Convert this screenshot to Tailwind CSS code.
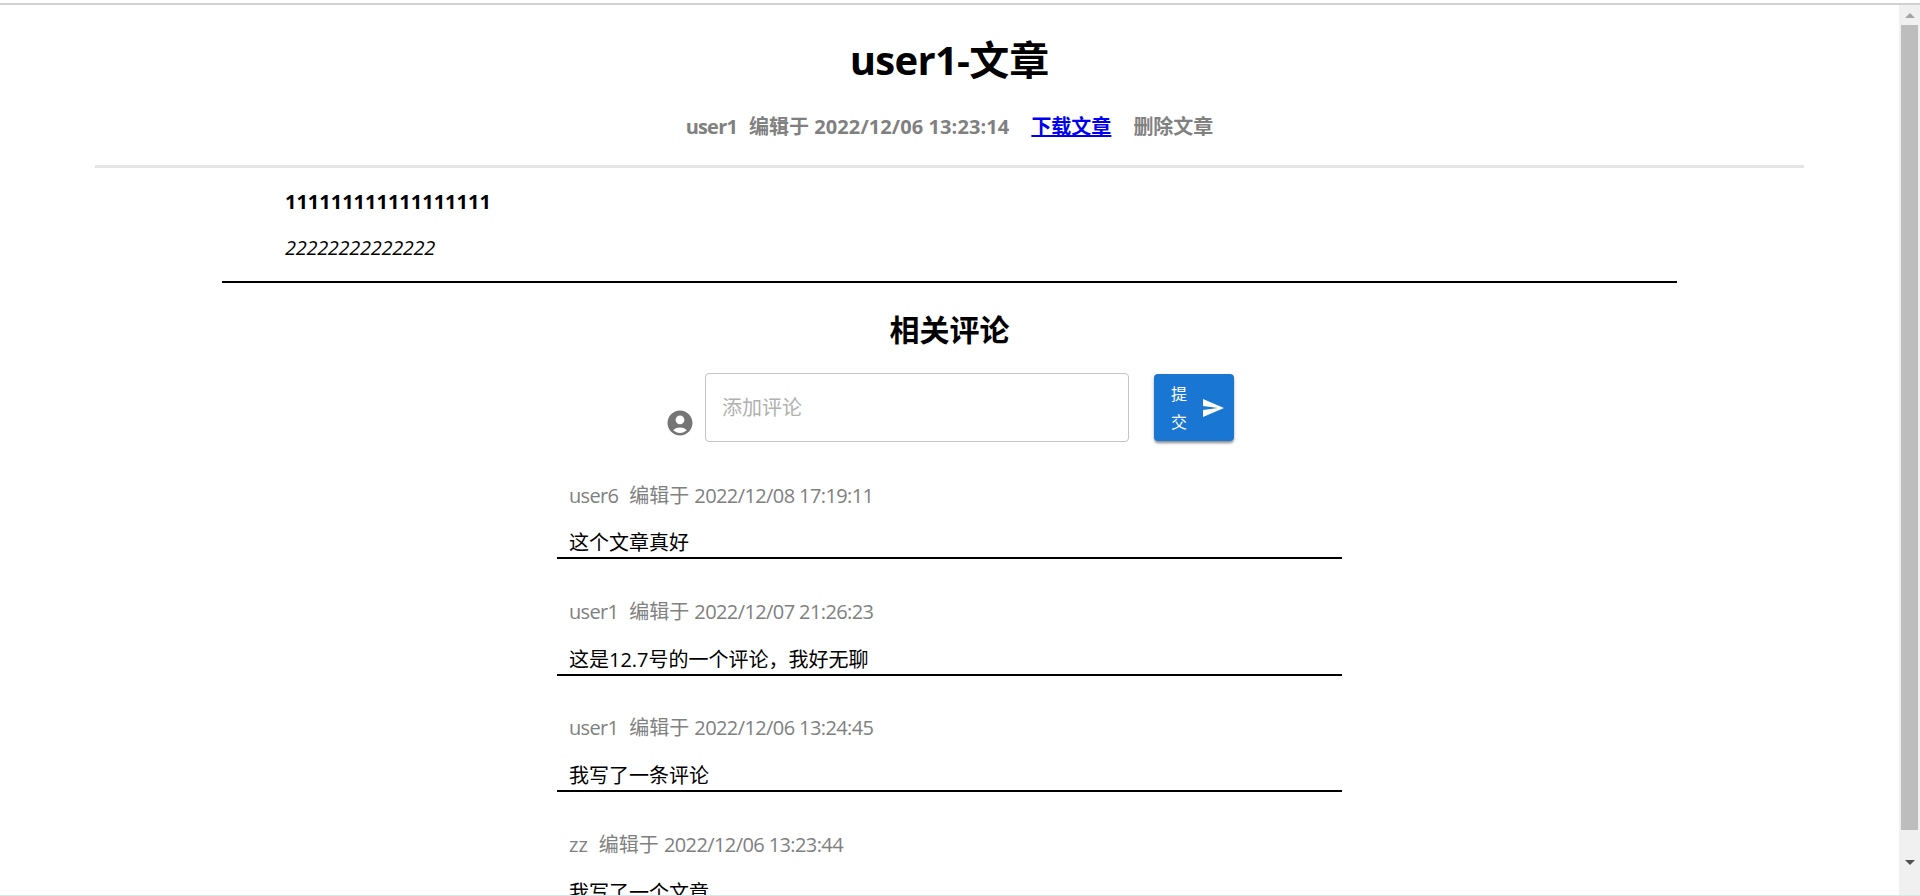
<!DOCTYPE html>
<html lang="zh-CN">
<head>
  <meta charset="UTF-8">
  <title>user1-文章</title>
  <script src="https://cdn.jsdelivr.net/npm/@tailwindcss/browser@4"></script>
</head>
<body class="h-[896px] overflow-hidden bg-white text-black font-['Open_Sans','Noto_Sans_CJK_SC',sans-serif]">
  <div class="flex flex-col h-[896px]">
    <div class="h-[3px] shrink-0"></div>
    <div class="h-[2px] shrink-0 bg-[#d0d0d0]"></div>
    <div class="flex flex-1 min-h-0">
      <!-- page -->
      <main class="flex-1 min-w-0 overflow-hidden">
        <header class="mx-[95px] border-b-[3px] border-[#e5e5e5] h-[163px] flex flex-col items-center">
          <h1 class="mt-[30px] text-[40px] leading-[50px] font-bold"><span class="tracking-[-0.7px]">user1-</span>文章</h1>
          <div class="mt-[28px] flex items-center text-[20px] leading-[28px] font-bold text-[#808080]">
            <span class="tracking-[-0.8px]">user1</span>
            <span class="ml-3">编辑于 <span class="tracking-[0.1px]">2022/12/06 13:23:14</span></span>
            <a href="#" class="ml-[22px] text-[#0000ee] underline">下载文章</a>
            <span class="ml-[22px]">删除文章</span>
          </div>
        </header>

        <section class="mx-[222px] border-b-2 border-black h-[115px] pl-[63px] pt-[20px]">
          <p class="text-[20px] leading-[28px] font-bold">111111111111111111</p>
          <p class="mt-[18px] text-[20px] leading-[28px] italic tracking-[-0.3px]">22222222222222</p>
        </section>

        <h2 class="mt-[25px] text-center text-[30px] leading-[44px] font-bold">相关评论</h2>

        <form class="mt-[21px] flex justify-center items-start">
          <svg class="w-[30px] h-[30px] mt-[35px] mr-[10px] text-[#757575]" viewBox="0 0 24 24" fill="currentColor"><path d="M12 2C6.48 2 2 6.48 2 12s4.48 10 10 10 10-4.48 10-10S17.52 2 12 2zm0 4c1.93 0 3.5 1.57 3.5 3.5S13.93 13 12 13s-3.5-1.57-3.5-3.5S10.07 6 12 6zm0 14c-2.03 0-3.98-.8-5.41-2.13C7.5 16.5 9.64 15.5 12 15.5s4.5 1 5.41 2.37C15.98 19.2 14.03 20 12 20z"/></svg>
          <input type="text" placeholder="添加评论" class="w-[424px] h-[69px] border border-[#c4c4c4] rounded-[4px] px-4 text-[20px] placeholder:text-[#b0b0b0]">
          <button type="button" class="ml-[25px] mt-px w-[80px] h-[67px] flex items-center pl-4 rounded-[4px] bg-[#1976d2] text-white text-[16px] shadow-[0_3px_3px_-1px_rgba(0,0,0,0.3),0_2px_2px_0_rgba(0,0,0,0.14),0_1px_5px_0_rgba(0,0,0,0.12)]">
            <span class="w-4 leading-[28px] ml-px">提交</span>
            <svg class="w-[24px] h-[24px] ml-[14px] shrink-0" viewBox="0 0 24 24" fill="currentColor"><path d="M2.01 21 23 12 2.01 3 2 10l15 2-15 2z"/></svg>
          </button>
        </form>

        <div class="mt-[32px] mx-auto w-[785px]">
          <article class="h-[85px] border-b-2 border-black px-3 pt-[8px]">
            <div class="flex text-[20px] leading-[28px] text-[#808080]"><span class="tracking-[-0.7px]">user6</span><span class="ml-[11px]">编辑于 <span class="tracking-[-0.6px]">2022/12/08 17:19:11</span></span></div>
            <p class="mt-[19px] text-[20px] leading-[28px]">这个文章真好</p>
          </article>
          <article class="h-[117px] border-b-2 border-black px-3 pt-[39px]">
            <div class="flex text-[20px] leading-[28px] text-[#808080]"><span class="tracking-[-0.7px]">user1</span><span class="ml-[11px]">编辑于 <span class="tracking-[-0.6px]">2022/12/07 21:26:23</span></span></div>
            <p class="mt-[20px] text-[20px] leading-[28px]">这是12.7号的一个评论，我好无聊</p>
          </article>
          <article class="h-[116px] border-b-2 border-black px-3 pt-[38px]">
            <div class="flex text-[20px] leading-[28px] text-[#808080]"><span class="tracking-[-0.7px]">user1</span><span class="ml-[11px]">编辑于 <span class="tracking-[-0.6px]">2022/12/06 13:24:45</span></span></div>
            <p class="mt-[20px] text-[20px] leading-[28px]">我写了一条评论</p>
          </article>
          <article class="px-3 pt-[39px]">
            <div class="flex text-[20px] leading-[28px] text-[#808080]"><span>zz</span><span class="ml-[11px]">编辑于 <span class="tracking-[-0.6px]">2022/12/06 13:23:44</span></span></div>
            <p class="mt-[20px] text-[20px] leading-[28px]">我写了一个文章</p>
          </article>
        </div>
      </main>

      <!-- scrollbar -->
      <aside class="w-[21px] shrink-0 bg-[#f0f0f0] flex flex-col items-center">
        <div class="h-[20px] shrink-0 flex items-center justify-center">
          <div class="w-0 h-0 border-x-[5px] border-x-transparent border-b-[5px] border-b-[#a3a3a3]"></div>
        </div>
        <div class="w-[17px] h-[805px] shrink-0 bg-[#bdbdbd]"></div>
        <div class="flex-1 flex items-center justify-center">
          <div class="w-0 h-0 border-x-[5px] border-x-transparent border-t-[5px] border-t-[#505050]"></div>
        </div>
      </aside>
    </div>
    <div class="h-px shrink-0 bg-[#d5e8e5]"></div>
  </div>
</body>
</html>
